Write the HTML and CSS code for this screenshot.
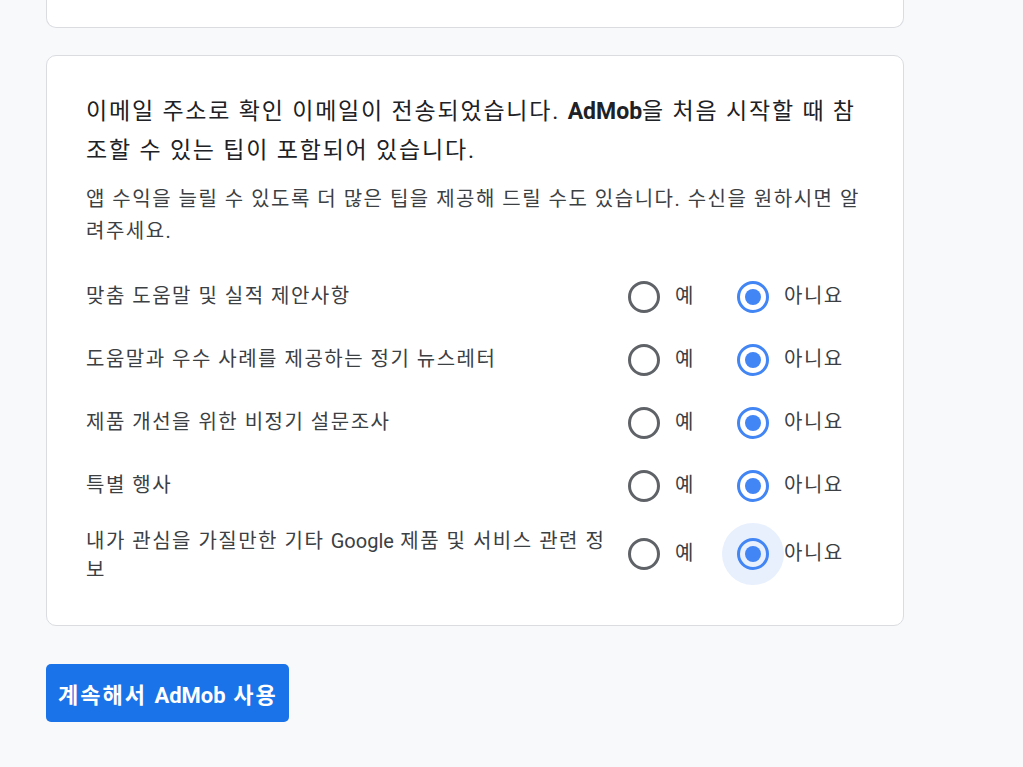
FILE: index.html
```html
<!DOCTYPE html>
<html lang="ko">
<head>
<meta charset="utf-8">
<link rel="stylesheet" href="styles.css">
</head>
<body>
<main class="page">
  <div class="card card-prev"></div>
  <section class="card card-main">
    <p class="lead">이메일 주소로 확인 이메일이 전송되었습니다. <b class="latin">AdMob</b>을 처음 시작할 때 참조할 수 있는 팁이 포함되어 있습니다.</p>
    <p class="sub">앱 수익을 늘릴 수 있도록 더 많은 팁을 제공해 드릴 수도 있습니다. 수신을 원하시면 알려주세요.</p>
    <div class="rows">
      <div class="row">
        <div class="label">맞춤 도움말 및 실적 제안사항</div>
        <div class="opt"><span class="radio"></span><span class="opt-text">예</span></div>
        <div class="opt"><span class="radio on"></span><span class="opt-text">아니요</span></div>
      </div>
      <div class="row">
        <div class="label">도움말과 우수 사례를 제공하는 정기 뉴스레터</div>
        <div class="opt"><span class="radio"></span><span class="opt-text">예</span></div>
        <div class="opt"><span class="radio on"></span><span class="opt-text">아니요</span></div>
      </div>
      <div class="row">
        <div class="label">제품 개선을 위한 비정기 설문조사</div>
        <div class="opt"><span class="radio"></span><span class="opt-text">예</span></div>
        <div class="opt"><span class="radio on"></span><span class="opt-text">아니요</span></div>
      </div>
      <div class="row">
        <div class="label">특별 행사</div>
        <div class="opt"><span class="radio"></span><span class="opt-text">예</span></div>
        <div class="opt"><span class="radio on"></span><span class="opt-text">아니요</span></div>
      </div>
      <div class="row row-last">
        <div class="label">내가 관심을 가질만한 기타 <span class="latin">Google</span> 제품 및 서비스 관련 정보</div>
        <div class="opt"><span class="radio"></span><span class="opt-text">예</span></div>
        <div class="opt"><span class="radio on focus"></span><span class="opt-text">아니요</span></div>
      </div>
    </div>
  </section>
  <button class="primary">계속해서 <span class="latin">AdMob</span> 사용</button>
</main>
</body>
</html>
```
FILE: styles.css
```css
html, body {
  margin: 0;
  padding: 0;
  background: #f8f9fa;
}
body {
  font-family: Roboto, "Noto Sans CJK KR", sans-serif;
  color: #3c4043;
}
.page {
  width: 858px;
  margin-left: 46px;
  display: flex;
  flex-direction: column;
  align-items: flex-start;
}
.card {
  box-sizing: border-box;
  width: 858px;
  background: #fff;
  border: 1px solid #dadce0;
}
.card-prev {
  height: 28px;
  border-top: none;
  border-radius: 0 0 10px 10px;
}
.card-main {
  margin-top: 27px;
  border-radius: 10px;
  padding: 36px 39px 40px 39px;
}
.latin {
  letter-spacing: 0;
}
.lead {
  margin: 0;
  font-size: 23px;
  line-height: 39px;
  letter-spacing: 1.8px;
  color: #202124;
}
.lead b {
  font-weight: 700;
}
.sub {
  margin: 13px 0 0 0;
  font-size: 20px;
  line-height: 32px;
  letter-spacing: 1.5px;
  color: #3c4043;
}
.rows {
  margin-top: 18px;
  display: flex;
  flex-direction: column;
}
.row {
  display: grid;
  grid-template-columns: 527px 109px 1fr;
  align-items: center;
  min-height: 63px;
}
.row-last {
  margin-top: 5px;
}
.label {
  font-size: 20px;
  line-height: 29px;
  letter-spacing: 1.5px;
}
.row-last .label {
  padding-top: 4px;
}
.opt {
  display: flex;
  align-items: center;
}
.radio {
  position: relative;
  width: 62px;
  height: 62px;
  flex: none;
  border-radius: 50%;
}
.radio::before {
  content: "";
  position: absolute;
  left: 15px;
  top: 15px;
  width: 32px;
  height: 32px;
  box-sizing: border-box;
  border: 3px solid #5f6368;
  border-radius: 50%;
}
.radio.on::before {
  border-color: #4285f4;
}
.radio.on::after {
  content: "";
  position: absolute;
  left: 23px;
  top: 23px;
  width: 16px;
  height: 16px;
  border-radius: 50%;
  background: #4285f4;
}
.radio.focus {
  background: #e8f0fe;
}
.opt-text {
  font-size: 20px;
  line-height: 29px;
  letter-spacing: 1.5px;
  color: #3c4043;
}
.primary {
  margin-top: 38px;
  height: 58px;
  padding: 0 11px 0 12px;
  border: none;
  border-radius: 5px;
  background: #1a73e8;
  color: #fff;
  font-family: Roboto, "Noto Sans CJK KR", sans-serif;
  font-size: 22px;
  font-weight: 700;
  letter-spacing: 2px;
  cursor: pointer;
}
```
